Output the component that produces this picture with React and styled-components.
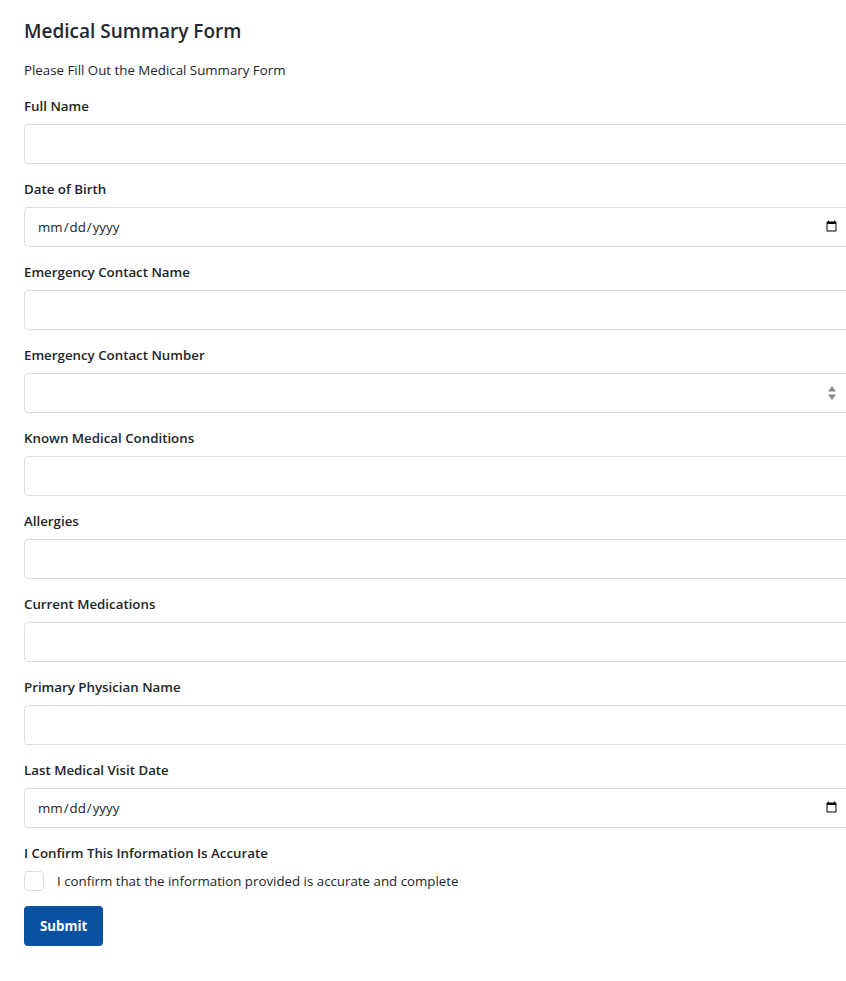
import React from 'react'
import styled, { createGlobalStyle } from 'styled-components'

const GlobalStyle = createGlobalStyle`
  html, body {
    margin: 0;
    padding: 0;
    background: #ffffff;
    overflow-x: hidden;
  }
  body {
    font-family: 'Segoe UI', 'Open Sans', 'Noto Sans', sans-serif;
    color: #212529;
  }
  * { box-sizing: border-box; }
`

const Page = styled.form`
  padding: 16px 0 40px 24px;
`

const Title = styled.h1`
  margin: 0;
  font-size: 19px;
  font-weight: 600;
  line-height: 30px;
  color: #1f2733;
`

const Subtitle = styled.p`
  margin: 14px 0 0;
  font-size: 13.3px;
  line-height: 20px;
  color: #212529;
`

const Group = styled.div`
  margin-top: ${p => p.first ? '16px' : '15px'};
`

const Label = styled.label`
  display: block;
  font-size: 13.3px;
  font-weight: 600;
  line-height: 20px;
  margin-bottom: 8px;
  color: #212529;
`

const FieldWrap = styled.div`
  position: relative;
`

const Input = styled.input`
  display: block;
  width: calc(100% + 12px);
  height: 40px;
  padding: 6px 12px;
  border: 1px solid #dcdfe3;
  border-radius: 4px;
  font-family: inherit;
  font-size: 13.3px;
  color: #212529;
  background: #fff;
  outline: none;
  &::-webkit-inner-spin-button { -webkit-appearance: none; margin: 0; }
  &::-webkit-calendar-picker-indicator { margin-right: 5px; }
`

const Spinner = styled.svg`
  position: absolute;
  right: 9px;
  top: 10px;
`

const CheckRow = styled.div`
  display: flex;
  align-items: center;
  gap: 13px;
  margin-top: 8px;
`

const Box = styled.input`
  appearance: none;
  width: 20px;
  height: 20px;
  margin: 0;
  border: 1px solid #dcdfe3;
  border-radius: 4px;
  background: #fff;
`

const CheckText = styled.span`
  font-size: 13.3px;
  line-height: 20px;
  color: #212529;
`

const Button = styled.button`
  margin-top: 15px;
  height: 40px;
  padding: 0 16px;
  border: none;
  border-radius: 4px;
  background: #0b51a1;
  color: #fff;
  font-family: inherit;
  font-size: 13.3px;
  font-weight: 700;
`

const fields = [
  { label: 'Full Name', type: 'text' },
  { label: 'Date of Birth', type: 'date' },
  { label: 'Emergency Contact Name', type: 'text' },
  { label: 'Emergency Contact Number', type: 'number' },
  { label: 'Known Medical Conditions', type: 'text' },
  { label: 'Allergies', type: 'text' },
  { label: 'Current Medications', type: 'text' },
  { label: 'Primary Physician Name', type: 'text' },
  { label: 'Last Medical Visit Date', type: 'date' },
]

export default function App() {
  return (
    <>
      <GlobalStyle />
      <Page onSubmit={e => e.preventDefault()}>
        <Title>Medical Summary Form</Title>
        <Subtitle>Please Fill Out the Medical Summary Form</Subtitle>
        {fields.map((f, i) => (
          <Group key={f.label} first={i === 0}>
            <Label>{f.label}</Label>
            <FieldWrap>
              <Input type={f.type} />
              {f.type === 'number' && (
                <Spinner width="10" height="20" viewBox="0 0 10 20">
                  <path d="M5 3 L9 8.5 L1 8.5 Z" fill="#8a8a8a" />
                  <path d="M5 17 L9 11.5 L1 11.5 Z" fill="#8a8a8a" />
                </Spinner>
              )}
            </FieldWrap>
          </Group>
        ))}
        <Group>
          <Label>I Confirm This Information Is Accurate</Label>
          <CheckRow>
            <Box type="checkbox" />
            <CheckText>I confirm that the information provided is accurate and complete</CheckText>
          </CheckRow>
        </Group>
        <Button type="submit">Submit</Button>
      </Page>
    </>
  )
}
